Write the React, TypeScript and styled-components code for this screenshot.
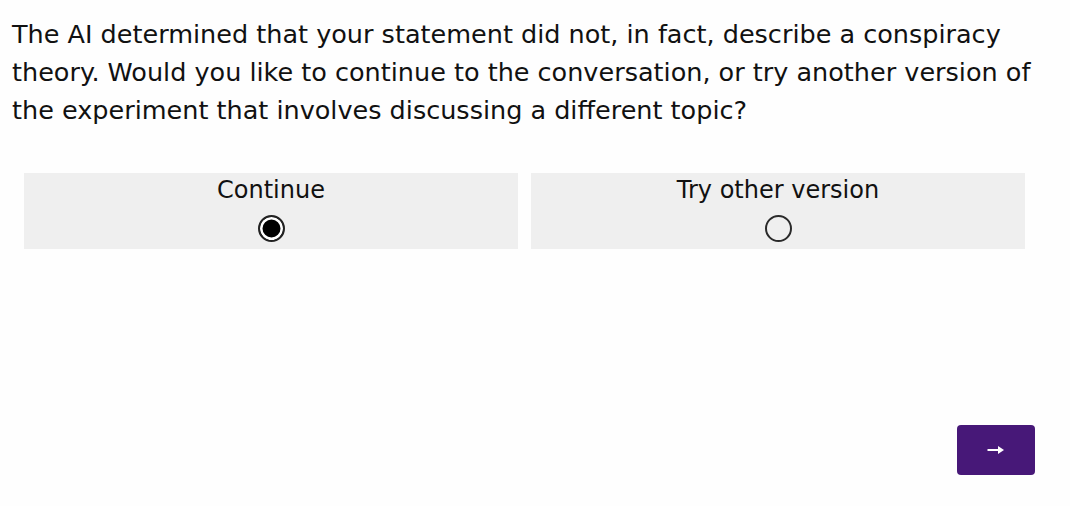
import React, { useState } from "react";
import styled, { createGlobalStyle } from "styled-components";

const Global = createGlobalStyle`
  html, body { margin: 0; padding: 0; background: #fefefe; }
  body { font-family: "DejaVu Sans", Verdana, sans-serif; color: #111; }
`;

const Page = styled.div`
  width: 1070px;
  height: 506px;
  box-sizing: border-box;
  padding: 15px 12px 0 12px;
  display: flex;
  flex-direction: column;
`;

const Question = styled.p`
  margin: 0;
  font-size: 25.5px;
  line-height: 38px;
  width: 1040px;
`;

const Choices = styled.div`
  margin: 44px 0 0 12px;
  display: grid;
  grid-template-columns: 494px 494px;
  column-gap: 13px;
`;

const Choice = styled.label`
  background: #efefef;
  height: 76px;
  display: flex;
  flex-direction: column;
  align-items: center;
  cursor: pointer;
`;

const ChoiceLabel = styled.span`
  font-size: 24px;
  line-height: 28px;
  margin-top: 3px;
`;

const Radio = styled.span<{ $checked: boolean }>`
  margin-top: 11px;
  width: 27px;
  height: 27px;
  box-sizing: border-box;
  border-radius: 50%;
  border: 2px solid ${(p) => (p.$checked ? "#222" : "#2a2a2a")};
  background: ${(p) => (p.$checked ? "#000" : "transparent")};
  box-shadow: ${(p) => (p.$checked ? "inset 0 0 0 2.5px #fff" : "none")};
`;

const Footer = styled.div`
  display: flex;
  justify-content: flex-end;
  margin-top: auto;
  padding: 0 23px 31px 0;
`;

const NextButton = styled.button`
  width: 78px;
  height: 50px;
  border: none;
  border-radius: 4px;
  background: #471878;
  display: flex;
  align-items: center;
  justify-content: center;
  padding: 0;
`;

export default function App() {
  const [sel, setSel] = useState(0);
  const opts = ["Continue", "Try other version"];
  return (
    <>
      <Global />
      <Page>
        <Question>
          The AI determined that your statement did not, in fact, describe a conspiracy
          theory. Would you like to continue to the conversation, or try another version of
          the experiment that involves discussing a different topic?
        </Question>
        <Choices>
          {opts.map((o, i) => (
            <Choice key={o} onClick={() => setSel(i)}>
              <ChoiceLabel>{o}</ChoiceLabel>
              <Radio $checked={sel === i} />
            </Choice>
          ))}
        </Choices>
        <Footer>
          <NextButton aria-label="Next">
            <svg width="18" height="12" viewBox="0 0 18 12">
              <path d="M0.5 6 H13" stroke="#fff" strokeWidth="2" />
              <path d="M11 2 L17 6 L11 10 Z" fill="#fff" />
            </svg>
          </NextButton>
        </Footer>
      </Page>
    </>
  );
}
